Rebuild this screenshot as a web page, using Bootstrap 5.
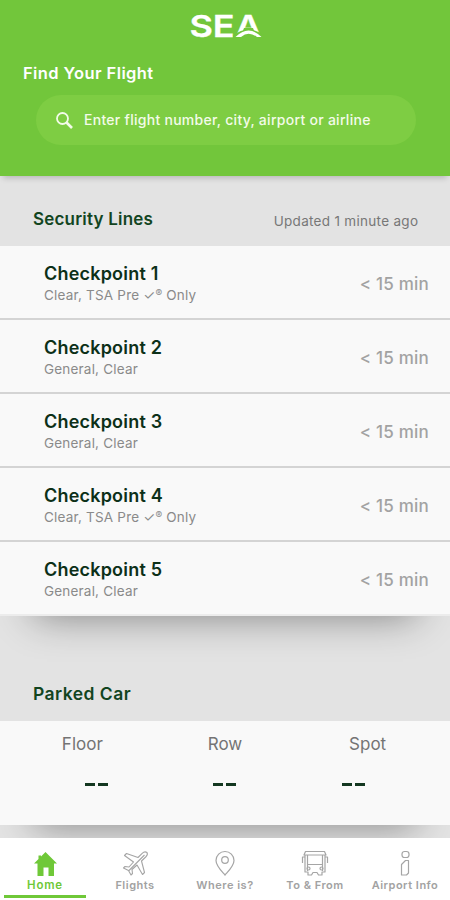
<!DOCTYPE html>
<html lang="en">
<head>
<meta charset="utf-8">
<meta name="viewport" content="width=device-width, initial-scale=1">
<title>SEA Airport</title>
<link href="https://cdn.jsdelivr.net/npm/bootstrap@5.3.0/dist/css/bootstrap.min.css" rel="stylesheet">
<style>
  body { font-family: Inter, "Liberation Sans", sans-serif; background: #e3e3e3; }
  .app { height: 900px; max-width: 450px; }
  .hero { height: 176px; background: #72c63b; padding: 4px 34px 0 36px; box-shadow: 0 5px 6px -3px rgba(0,0,0,.2); }
  .hero h1 { font-size: 16.5px; line-height: 20px; margin: 15px 0 12px -13px; letter-spacing: .4px; }
  .search { height: 50px; background: #7ecd43; padding-left: 19px; gap: 10px; }
  .search input { font-size: 14px; font-weight: 500; letter-spacing: .28px; color: #f3fbe9; margin-top: -2px !important; }
  .search input::placeholder { color: #f3fbe9; opacity: 1; }
  .section-title { font-size: 17px; line-height: 22px; color: #12451f; letter-spacing: .2px; }
  .car-head .section-title { font-size: 17.5px; letter-spacing: .45px; }
  .updated { font-size: 13.5px; line-height: 20px; color: #777; letter-spacing: .3px; margin-right: -.3px; }
  .lines-head { height: 70px; padding: 32px 32px 0 33px; }
  .lines-head .updated { margin-top: -1px; }
  .panel { background: #f9f9f9; }
  .lifted { box-shadow: 0 34px 38px -34px rgba(0,0,0,.44); }
  .checkpoint { height: 74px; padding: 17px 21px 0 44px; border-bottom: 2px solid #d4d4d4; }
  .checkpoint:last-child { border-bottom-color: #ececec; }
  .checkpoint h3 { font-size: 18px; line-height: 22px; color: #0c3018; letter-spacing: .2px; }
  .checkpoint p { font-size: 13.5px; line-height: 18px; color: #8a8a8a; margin-top: 1px; letter-spacing: .2px; }
  .checkpoint sup { font-size: 10px; top: -.3em; }
  .wait { font-size: 17px; line-height: 24px; margin-top: 9px; color: #a2a2a2; letter-spacing: .2px; font-weight: 500; }
  .car-head { height: 105px; padding: 67px 33px 0; }
  .car { height: 104px; padding: 11px 11px 0 11px; }
  .car dt { font-size: 17px; line-height: 24px; font-weight: 400; color: #747474; }
  .dash { height: 3px; width: 10px; background: #143821; }
  .dashes { gap: 3px; margin-top: 27px; }
  .tabs { height: 62px; margin-top: 13px; background: #fff; z-index: 2; }
  .tab { color: #a2a2a2; font-size: 11px; font-weight: 600; line-height: 14px; letter-spacing: .5px; padding-top: 11px; border-bottom: 3px solid transparent; margin: 0 4px 2px; white-space: nowrap; }
  .tab svg { margin-bottom: 1px; }
  .tab.current { color: #6fc838; border-color: #6fc838; font-size: 11.5px; letter-spacing: .8px; }
</style>
<script src="https://cdn.jsdelivr.net/npm/bootstrap@5.3.0/dist/js/bootstrap.bundle.min.js"></script>
</head>
<body>
<div class="app d-flex flex-column mx-auto overflow-hidden">
  <header class="hero flex-shrink-0 position-relative text-white">
    <svg class="d-block mx-auto" width="90" height="44" viewBox="0 0 90 44" role="img" aria-label="SEA">
      <text transform="scale(1.200 1)" x="7 26.500 45.200" y="33" font-family="Inter" font-weight="600" font-size="30" fill="#fff" stroke="#fff" stroke-width=".3">SEA</text>
      <path d="M63 24h9l2 5H61Z" fill="#72c63b"/>
      <path d="M52 31.500Q67.500 19.500 83 31.500V36H52Z" fill="#72c63b"/>
      <path d="M54.500 33Q67.500 20 80.500 33H76Q67.500 26.500 60 33Z" fill="#fff"/>
    </svg>
    <h1 class="fw-semibold">Find Your Flight</h1>
    <div class="search d-flex align-items-center rounded-pill">
      <svg width="19" height="19" viewBox="0 0 19 19" fill="none" stroke="#f3fbe9"><circle cx="7.500" cy="7.500" r="5.500" stroke-width="1.800"/><path d="m11.500 11.500 5.500 5.500" stroke-width="2.700"/></svg>
      <input class="flex-grow-1 border-0 bg-transparent p-0" type="text" placeholder="Enter flight number, city, airport or airline">
    </div>
  </header>

  <main>
    <div class="lines-head d-flex justify-content-between">
      <h2 class="section-title fw-semibold mb-0">Security Lines</h2>
      <span class="updated pt-1">Updated 1 minute ago</span>
    </div>
    <section class="panel lifted">
      <div class="checkpoint d-flex justify-content-between">
        <div><h3 class="fw-semibold mb-0">Checkpoint 1</h3><p class="mb-0">Clear, TSA Pre ✓<sup>®</sup> Only</p></div><span class="wait">&lt; 15 min</span>
      </div>
      <div class="checkpoint d-flex justify-content-between">
        <div><h3 class="fw-semibold mb-0">Checkpoint 2</h3><p class="mb-0">General, Clear</p></div><span class="wait">&lt; 15 min</span>
      </div>
      <div class="checkpoint d-flex justify-content-between">
        <div><h3 class="fw-semibold mb-0">Checkpoint 3</h3><p class="mb-0">General, Clear</p></div><span class="wait">&lt; 15 min</span>
      </div>
      <div class="checkpoint d-flex justify-content-between">
        <div><h3 class="fw-semibold mb-0">Checkpoint 4</h3><p class="mb-0">Clear, TSA Pre ✓<sup>®</sup> Only</p></div><span class="wait">&lt; 15 min</span>
      </div>
      <div class="checkpoint d-flex justify-content-between">
        <div><h3 class="fw-semibold mb-0">Checkpoint 5</h3><p class="mb-0">General, Clear</p></div><span class="wait">&lt; 15 min</span>
      </div>
    </section>

    <div class="car-head"><h2 class="section-title fw-semibold mb-0">Parked Car</h2></div>
    <section class="panel lifted car">
      <dl class="row g-0 text-center mb-0">
        <div class="col-4"><dt>Floor</dt><dd class="dashes d-flex justify-content-center ps-4 ms-1 mb-0"><span class="dash"></span><span class="dash"></span></dd></div>
        <div class="col-4"><dt>Row</dt><dd class="dashes d-flex justify-content-center mb-0"><span class="dash"></span><span class="dash"></span></dd></div>
        <div class="col-4"><dt>Spot</dt><dd class="dashes d-flex justify-content-center pe-4 me-1 mb-0"><span class="dash"></span><span class="dash"></span></dd></div>
      </dl>
    </section>
  </main>

  <nav class="tabs row g-0 flex-shrink-0 position-relative">
    <div class="col d-flex flex-column"><a class="tab current flex-grow-1 d-flex flex-column align-items-center text-decoration-none" href="#">
      <svg width="28" height="28" viewBox="0 0 28 28"><path d="M14.500 3 26 14.500H23V27h-5.500v-8.500h-5V27H6.500V14.500H3L7.500 10V6.500h2.500v1Z" fill="#6fc838"/></svg>Home</a></div>
    <div class="col d-flex flex-column"><a class="tab flex-grow-1 d-flex flex-column align-items-center text-decoration-none" href="#">
      <svg width="28" height="28" viewBox="0 0 28 28" fill="none" stroke="#a5a5a5" stroke-width="1.100" stroke-linejoin="round"><path d="M26 3.500c-1.500-1-3.500-.5-4.800.8L17 8.500 5.500 4.500 3.500 6.500 12.500 13 8 18 4 17.500 2.500 19l5 2.500L10 26l1.500-1.500-.5-4 5-4.500 5.500 9.500 2-2L20.500 12l4.200-4C26 6.700 26.800 4.800 26 3.500ZM8 21.500 23.500 6"/></svg>Flights</a></div>
    <div class="col d-flex flex-column"><a class="tab flex-grow-1 d-flex flex-column align-items-center text-decoration-none" href="#">
      <svg width="28" height="28" viewBox="0 0 28 28" fill="none" stroke="#a5a5a5" stroke-width="1.200"><path d="M14 26C11 22.500 5 17 5 11.500a9 9 0 0 1 18 0C23 17 17 22.500 14 26Z"/><circle cx="14" cy="11" r="3.300"/></svg>Where is?</a></div>
    <div class="col d-flex flex-column"><a class="tab flex-grow-1 d-flex flex-column align-items-center text-decoration-none" href="#">
      <svg width="28" height="28" viewBox="0 0 28 28" fill="none" stroke="#a5a5a5" stroke-width="1.200" stroke-linejoin="round"><path d="M4.500 2.500h19L25 6H3ZM4 6v17h3v3h3.500l1.500-2.500h4l1.500 2.500H21v-3h3V6M4 8H1.500v6M24 8h2.500v6M6.500 6v16M21.500 6v16M6.500 15.500h15"/><circle cx="7.500" cy="19.500" r="1.500"/><circle cx="20.500" cy="19.500" r="1.500"/></svg>To &amp; From</a></div>
    <div class="col d-flex flex-column"><a class="tab flex-grow-1 d-flex flex-column align-items-center text-decoration-none" href="#">
      <svg width="28" height="28" viewBox="0 0 28 28" fill="none" stroke="#a5a5a5" stroke-width="1.200" stroke-linejoin="round"><rect x="11" y="2.500" width="7" height="6" rx="2.500"/><path d="M17.500 11.500V24l-2 2h-5V15.500l4-4Z"/></svg>Airport Info</a></div>
  </nav>
</div>
</body>
</html>
